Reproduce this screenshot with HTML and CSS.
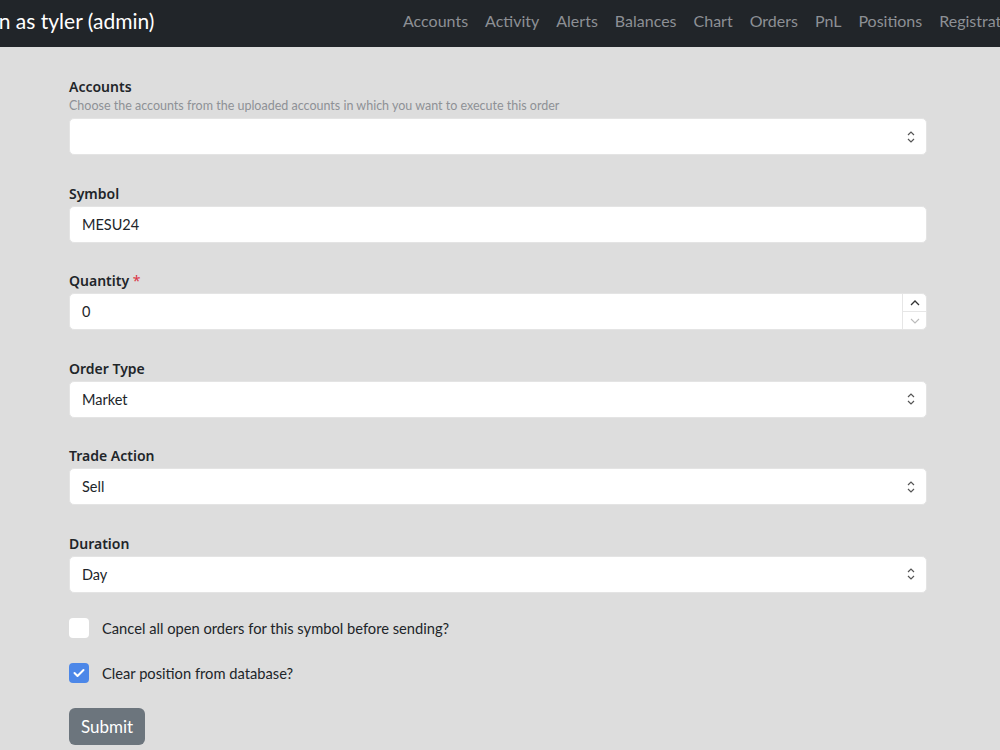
FILE: index.html
```html
<!DOCTYPE html>
<html lang="en">
<head>
    <meta charset="UTF-8">
    <meta name="viewport" content="width=device-width, initial-scale=1.0">
    <title>Place Order</title>
    <link rel="stylesheet" href="styles.css">
</head>
<body>
    <nav class="navbar">
        <div class="brand">Logged in as tyler (admin)</div>
        <ul class="nav-links">
            <li>Accounts</li>
            <li>Activity</li>
            <li>Alerts</li>
            <li>Balances</li>
            <li>Chart</li>
            <li>Orders</li>
            <li>PnL</li>
            <li>Positions</li>
            <li>Registration</li>
        </ul>
    </nav>

    <main class="container">
        <div class="group">
            <label class="label">Accounts</label>
            <div class="help">Choose the accounts from the uploaded accounts in which you want to execute this order</div>
            <div class="control select">
                <span class="value"></span>
                <svg class="chev" width="10" height="14" viewBox="0 0 10 14"><path d="M2 5 L5 2 L8 5 M2 9 L5 12 L8 9" fill="none" stroke="#555" stroke-width="1.2"/></svg>
            </div>
        </div>

        <div class="group">
            <label class="label">Symbol</label>
            <div class="control"><span class="value">MESU24</span></div>
        </div>

        <div class="group">
            <label class="label">Quantity <span class="req">*</span></label>
            <div class="control number">
                <span class="value">0</span>
                <div class="spinner">
                    <div class="spin up"><svg width="10" height="6" viewBox="0 0 10 6"><path d="M1 5 L5 1 L9 5" fill="none" stroke="#333" stroke-width="1.3"/></svg></div>
                    <div class="spin down"><svg width="10" height="6" viewBox="0 0 10 6"><path d="M1 1 L5 5 L9 1" fill="none" stroke="#bbb" stroke-width="1.1"/></svg></div>
                </div>
            </div>
        </div>

        <div class="group">
            <label class="label">Order Type</label>
            <div class="control select">
                <span class="value">Market</span>
                <svg class="chev" width="10" height="14" viewBox="0 0 10 14"><path d="M2 5 L5 2 L8 5 M2 9 L5 12 L8 9" fill="none" stroke="#555" stroke-width="1.2"/></svg>
            </div>
        </div>

        <div class="group">
            <label class="label">Trade Action</label>
            <div class="control select">
                <span class="value">Sell</span>
                <svg class="chev" width="10" height="14" viewBox="0 0 10 14"><path d="M2 5 L5 2 L8 5 M2 9 L5 12 L8 9" fill="none" stroke="#555" stroke-width="1.2"/></svg>
            </div>
        </div>

        <div class="group">
            <label class="label">Duration</label>
            <div class="control select">
                <span class="value">Day</span>
                <svg class="chev" width="10" height="14" viewBox="0 0 10 14"><path d="M2 5 L5 2 L8 5 M2 9 L5 12 L8 9" fill="none" stroke="#555" stroke-width="1.2"/></svg>
            </div>
        </div>

        <div class="checks">
            <div class="check">
                <span class="box"></span>
                <span class="check-label">Cancel all open orders for this symbol before sending?</span>
            </div>

            <div class="check">
                <span class="box checked">
                    <svg width="12" height="10" viewBox="0 0 12 10"><path d="M1.5 5 L4.5 8 L10.5 2" fill="none" stroke="#fff" stroke-width="2" stroke-linecap="round" stroke-linejoin="round"/></svg>
                </span>
                <span class="check-label">Clear position from database?</span>
            </div>
        </div>

        <button class="btn">Submit</button>
    </main>
</body>
</html>
```

FILE: styles.css
```css
* { box-sizing: border-box; margin: 0; padding: 0; }
body { font-family: Lato, "Noto Sans", sans-serif; background: #dddddd; color: #212529; overflow: hidden; }

.navbar { display: flex; align-items: center; height: 47px; padding-bottom: 6px; background: #212529; white-space: nowrap; overflow: hidden; }
.brand { flex: none; width: 403px; margin-left: -78px; color: #fff; font-size: 21px; }
.nav-links { display: flex; list-style: none; margin-left: 78px; }
.nav-links li { padding: 0 8.5px; color: #8d9095; font-size: 16px; }
.nav-links li:first-child { padding-left: 0; }

.container { padding: 29px 73px 0 69px; }
.group { margin-bottom: 27.5px; }
.label { display: block; font-family: "Noto Sans", sans-serif; font-size: 14px; line-height: 21px; font-weight: 600; margin-bottom: 2px; }
.req { color: #dc3545; font-weight: 400; }
.help { font-size: 12.5px; line-height: 14px; color: #8e9196; margin-bottom: 5px; }

.control { display: flex; align-items: center; height: 37px; background: #fff; border: 1px solid #e4e4e4; border-radius: 5px; padding-left: 12px; font-size: 14.5px; }
.value { flex: 1; }
.select .chev { margin-right: 10px; }
.spinner { display: flex; flex-direction: column; width: 24px; height: 100%; border-left: 1px solid #e6e6e6; }
.spin { flex: 1; display: flex; align-items: center; justify-content: center; }
.spin.up { border-bottom: 1px solid #e6e6e6; }

.checks { margin-top: -2.5px; }
.check { display: flex; align-items: center; gap: 13px; margin-bottom: 25px; font-size: 14.7px; }
.box { display: flex; align-items: center; justify-content: center; width: 20px; height: 20px; background: #fff; border-radius: 4px; }
.box.checked { background: #4c87e8; }

.btn { padding: 7px 12px; background: #6c757d; color: #fff; border: none; border-radius: 6px; font-family: inherit; font-size: 17px; line-height: 23px; }
```
